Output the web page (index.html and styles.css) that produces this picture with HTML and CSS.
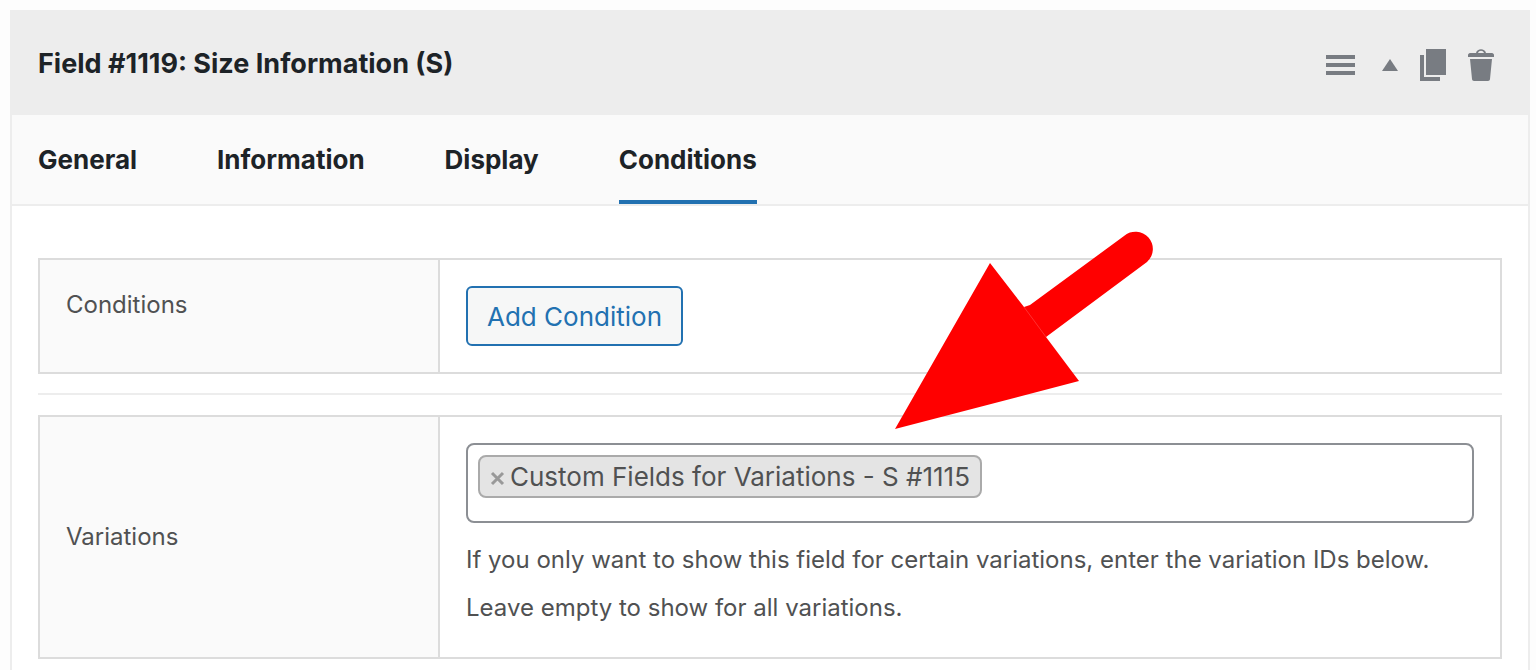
FILE: index.html
```html
<!DOCTYPE html>
<html lang="en">
<head>
<meta charset="utf-8">
<meta name="viewport" content="width=device-width, initial-scale=1">
<title>Field #1119: Size Information (S)</title>
<link rel="stylesheet" href="styles.css">
</head>
<body>
<main class="panel">
  <header class="panel-header">
    <h1 class="panel-title">Field #1119: Size Information (S)</h1>
    <div class="actions">
      <button class="icon-button" type="button" aria-label="Reorder">
        <svg width="34" height="34" viewBox="0 0 34 34"><path d="M0 7h29v4H0zM0 15h29v4H0zM0 23h29v4H0z"/></svg>
      </button>
      <button class="icon-button" type="button" aria-label="Collapse">
        <svg width="16" height="34" viewBox="0 0 16 34"><path d="M8 11l8 12H0z"/></svg>
      </button>
      <button class="icon-button" type="button" aria-label="Duplicate">
        <svg width="26" height="34" viewBox="0 0 26 34"><path d="M6 1h20v26H6zM0 7h4v22h16v4H0z"/></svg>
      </button>
      <button class="icon-button" type="button" aria-label="Delete">
        <svg width="26" height="34" viewBox="0 0 26 34"><path d="M2 5h6c1-5 9-5 10 0h6c1 0 2 1 2 2v2H0V7c0-1 1-2 2-2zm8 0h6c-1-3-5-3-6 0zM2 11h22l-2 20c0 1-1 2-2 2H6c-1 0-2-1-2-2z" fill-rule="evenodd"/></svg>
      </button>
    </div>
  </header>
  <nav class="tabs" role="tablist">
    <button class="tab" type="button" role="tab" aria-selected="false">General</button>
    <button class="tab" type="button" role="tab" aria-selected="false">Information</button>
    <button class="tab" type="button" role="tab" aria-selected="false">Display</button>
    <button class="tab tab-active" type="button" role="tab" aria-selected="true">Conditions</button>
  </nav>
  <section class="panel-body">
    <div class="row">
      <div class="row-label">Conditions</div>
      <div class="row-content">
        <button class="add-button" type="button">Add Condition</button>
      </div>
    </div>
    <hr class="divider">
    <div class="row row-middle">
      <label class="row-label" for="variations">Variations</label>
      <div class="row-content">
        <div class="token-field">
          <span class="token">
            <button class="token-remove" type="button" aria-label="Remove">
              <svg width="16" height="16" viewBox="0 0 16 16"><path d="M2 3l11 11M13 3L2 14"/></svg>
            </button>
            <span>Custom Fields for Variations - S #1115</span>
          </span>
          <input class="token-input" id="variations" type="text">
        </div>
        <p class="help">If you only want to show this field for certain variations, enter the variation IDs below.<br>Leave empty to show for all variations.</p>
      </div>
    </div>
  </section>
</main>
<svg class="arrow" width="260" height="200" viewBox="0 0 260 200" aria-hidden="true">
  <path d="M0 199L95 33L129 77L135 75L229 6A17 17 0 0 1 252 32L151 107L184 151Z"/>
  <path class="arrow-seam" d="M129 77L151 107"/>
</svg>
</body>
</html>
```
FILE: styles.css
```css
* {
  box-sizing: border-box;
}

body {
  position: relative;
  margin: 0;
  padding: 10px 6px 0 10px;
  background: #fdfdfd;
  color: #505152;
  font-family: Inter, "Liberation Sans", sans-serif;
  font-size: 24px;
}

button,
input {
  font: inherit;
  color: inherit;
}

.panel {
  min-height: calc(100vh - 10px);
  border: 2px solid #ededed;
  border-bottom: 0;
  background: #fff;
}

.panel-header {
  display: flex;
  align-items: center;
  justify-content: space-between;
  height: 103px;
  padding: 0 34px 0 26px;
  background: #ededed;
}

.panel-title {
  margin: 0;
  color: #1d2327;
  font-size: 27px;
  font-weight: 700;
}

.actions {
  display: flex;
  align-items: center;
  gap: 22px;
  padding-top: 2px;
}

.icon-button {
  display: block;
  padding: 0;
  border: 0;
  background: none;
  cursor: pointer;
}

.icon-button svg {
  display: block;
  fill: #787c82;
}

.tabs {
  display: flex;
  gap: 80px;
  height: 91px;
  padding: 0 26px;
  border-bottom: 2px solid #ededed;
  background: #fafafa;
}

.tab {
  padding: 4px 0 0;
  border: 0;
  border-bottom: 4px solid transparent;
  background: none;
  color: #1d2327;
  font-size: 26px;
  font-weight: 700;
  cursor: pointer;
}

.tab-active {
  border-bottom-color: #2271b1;
}

.panel-body {
  padding: 52px 26px 0;
}

.row {
  display: grid;
  grid-template-columns: 400px 1fr;
  border: 2px solid #dcdcdc;
}

.row-label {
  display: flex;
  padding: 26px;
  border-right: 2px solid #dcdcdc;
  background: #fafafa;
  line-height: 38px;
}

.row-middle .row-label {
  align-items: center;
}

.row-content {
  padding: 26px;
}

.row-middle .row-content {
  padding-bottom: 25px;
}

.divider {
  height: 2px;
  margin: 19px 0 20px;
  border: 0;
  background: #ededed;
}

.add-button {
  display: block;
  height: 60px;
  padding: 0 19px;
  border: 2px solid #2271b1;
  border-radius: 6px;
  background: #f6f7f7;
  color: #2271b1;
  font-size: 26px;
  cursor: pointer;
}

.token-field {
  display: flex;
  align-items: flex-start;
  min-height: 80px;
  padding: 10px;
  border: 2px solid #8c8f94;
  border-radius: 8px;
}

.token {
  display: flex;
  align-items: center;
  gap: 4px;
  height: 43px;
  padding: 0 10px;
  border: 2px solid #aaa;
  border-radius: 8px;
  background: #e4e4e4;
  font-size: 26px;
}

.token-remove {
  padding: 2px 0 0;
  border: 0;
  background: none;
  cursor: pointer;
}

.token-remove svg {
  display: block;
  fill: none;
  stroke: #999;
  stroke-width: 3;
}

.token-input {
  flex: 1;
  min-width: 0;
  height: 43px;
  border: 0;
  outline: 0;
  background: none;
}

.help {
  margin: 13px 0 0;
  line-height: 48px;
}

.arrow {
  position: absolute;
  top: 230px;
  left: 895px;
  fill: #f00;
  pointer-events: none;
}

.arrow-seam {
  stroke: #ff3030;
  stroke-width: 1;
}
```
